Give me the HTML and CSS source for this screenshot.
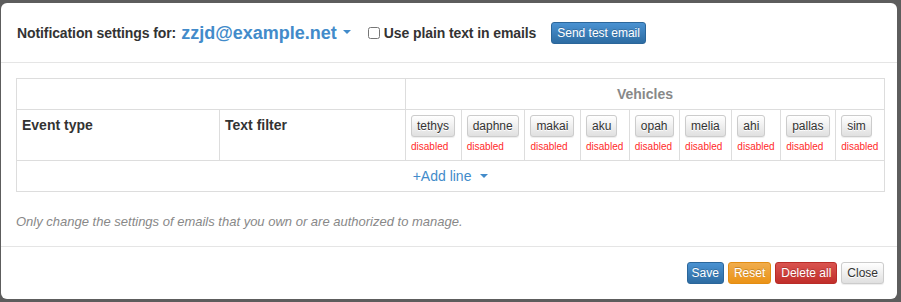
FILE: index.html
```html
<!DOCTYPE html>
<html lang="en">
<head>
  <meta charset="UTF-8" />
  <title>Notification settings</title>
  <link rel="stylesheet" href="styles.css">
</head>
<body>

<div class="modal">
  <div class="modal-header">
    <h4 class="modal-title">Notification settings for:</h4>
    <span class="email-pick">zzjd@example.net<span class="caret"></span></span>
    <label class="plain-text"><input type="checkbox" /> Use plain text in emails</label>
    <button class="btn btn-xs btn-primary">Send test email</button>
  </div>

  <div class="modal-body">
    <table class="table">
      <thead>
        <tr>
          <th colspan="2"></th>
          <th colspan="9" class="vehicles-head">Vehicles</th>
        </tr>
        <tr>
          <th class="col-event">Event type</th>
          <th class="col-filter">Text filter</th>
          <th class="vehicle"><button class="btn btn-xs btn-default">tethys</button><div class="state">disabled</div></th>
          <th class="vehicle"><button class="btn btn-xs btn-default">daphne</button><div class="state">disabled</div></th>
          <th class="vehicle"><button class="btn btn-xs btn-default">makai</button><div class="state">disabled</div></th>
          <th class="vehicle"><button class="btn btn-xs btn-default">aku</button><div class="state">disabled</div></th>
          <th class="vehicle"><button class="btn btn-xs btn-default">opah</button><div class="state">disabled</div></th>
          <th class="vehicle"><button class="btn btn-xs btn-default">melia</button><div class="state">disabled</div></th>
          <th class="vehicle"><button class="btn btn-xs btn-default">ahi</button><div class="state">disabled</div></th>
          <th class="vehicle"><button class="btn btn-xs btn-default">pallas</button><div class="state">disabled</div></th>
          <th class="vehicle"><button class="btn btn-xs btn-default">sim</button><div class="state">disabled</div></th>
        </tr>
      </thead>
      <tbody>
        <tr>
          <td colspan="11" class="add-line"><a href="#">+Add line <span class="caret"></span></a></td>
        </tr>
      </tbody>
    </table>

    <p class="note">Only change the settings of emails that you own or are authorized to manage.</p>
  </div>

  <div class="modal-footer">
    <button class="btn btn-xs btn-primary">Save</button>
    <button class="btn btn-xs btn-warning">Reset</button>
    <button class="btn btn-xs btn-danger">Delete all</button>
    <button class="btn btn-xs btn-default">Close</button>
  </div>
</div>

</body>
</html>
```

FILE: styles.css
```css
body {
  font-family: 'Liberation Sans', Arial, sans-serif;
  font-size: 14px;
  line-height: 20px;
  margin: 0;
  padding: 0;
  background-color: #5d5d5d;
  color: #333;
}

.modal {
  width: 896px;
  height: 296px;
  margin: 3px 0 0 1px;
  background-color: #fff;
  border-radius: 6px;
  overflow: hidden;
}

.modal-header {
  display: flex;
  align-items: center;
  height: 29px;
  padding: 15px 16px;
  border-bottom: 1px solid #e5e5e5;
}

.modal-title {
  margin: 0;
  font-size: 14px;
  font-weight: bold;
  letter-spacing: -0.1px;
  color: #333;
}

.email-pick {
  margin-left: 5px;
  font-size: 18px;
  font-weight: bold;
  color: #428bca;
}

.caret {
  display: inline-block;
  width: 0;
  height: 0;
  margin-left: 6px;
  vertical-align: middle;
  border-top: 4px solid;
  border-left: 4px solid transparent;
  border-right: 4px solid transparent;
}

.email-pick .caret {
  margin-left: 6px;
  margin-top: -3px;
}

.plain-text {
  display: flex;
  align-items: center;
  margin-left: 17px;
  font-weight: bold;
  letter-spacing: -0.1px;
  color: #333;
}

.plain-text input {
  width: 12px;
  height: 12px;
  margin: 0 4px 0 0;
}

.plain-text + .btn {
  margin-left: 15px;
}

.btn {
  font-family: 'Liberation Sans', Arial, sans-serif;
  display: inline-block;
  border: 1px solid transparent;
  border-radius: 3px;
  cursor: pointer;
}

.btn-xs {
  padding: 1px 5px;
  font-size: 12px;
  line-height: 18px;
}

.btn-primary {
  color: #fff;
  background-image: linear-gradient(to bottom, #4a92d2 0%, #2d6ca2 100%);
  border-color: #2b669a;
  text-shadow: 0 -1px 0 rgba(0, 0, 0, 0.2);
}

.btn-warning {
  color: #fff;
  background-image: linear-gradient(to bottom, #f0ad4e 0%, #eb9316 100%);
  border-color: #e38d13;
  text-shadow: 0 -1px 0 rgba(0, 0, 0, 0.2);
}

.btn-danger {
  color: #fff;
  background-image: linear-gradient(to bottom, #d9534f 0%, #c12e2a 100%);
  border-color: #b92c28;
  text-shadow: 0 -1px 0 rgba(0, 0, 0, 0.2);
}

.btn-default {
  color: #333;
  background-image: linear-gradient(to bottom, #fff 0%, #e0e0e0 100%);
  border-color: #ccc;
  text-shadow: 0 1px 0 #fff;
  box-shadow: inset 0 1px 0 rgba(255, 255, 255, 0.15), 0 1px 1px rgba(0, 0, 0, 0.075);
}

.modal-body {
  padding: 15px 12px 15px 15px;
}

.table {
  width: 100%;
  margin-bottom: 20px;
  border-collapse: collapse;
  border: 1px solid #ddd;
}

.table th,
.table td {
  padding: 5px;
  border: 1px solid #ddd;
  vertical-align: top;
  text-align: left;
}

.vehicles-head {
  text-align: center !important;
  color: #888;
}

.col-event {
  width: 192px;
}

.col-filter {
  width: 175px;
}

.vehicle {
  white-space: nowrap;
}

.vehicle .btn {
  display: block;
}

.state {
  margin-top: 2px;
  font-size: 10px;
  font-weight: normal;
  line-height: 16px;
  color: #ff2a2a;
}

.add-line {
  text-align: center !important;
}

.add-line a {
  color: #428bca;
  text-decoration: none;
}

.add-line .caret {
  margin-left: 5px;
  margin-top: -2px;
}

.note {
  margin: 0;
  font-size: 13px;
  line-height: 19px;
  font-style: italic;
  color: #888;
}

.modal-footer {
  display: flex;
  justify-content: flex-end;
  gap: 4px;
  padding: 15px 13px 15px 15px;
  border-top: 1px solid #e5e5e5;
}

.modal-footer .btn-primary {
  padding: 1px 4px;
}
```
